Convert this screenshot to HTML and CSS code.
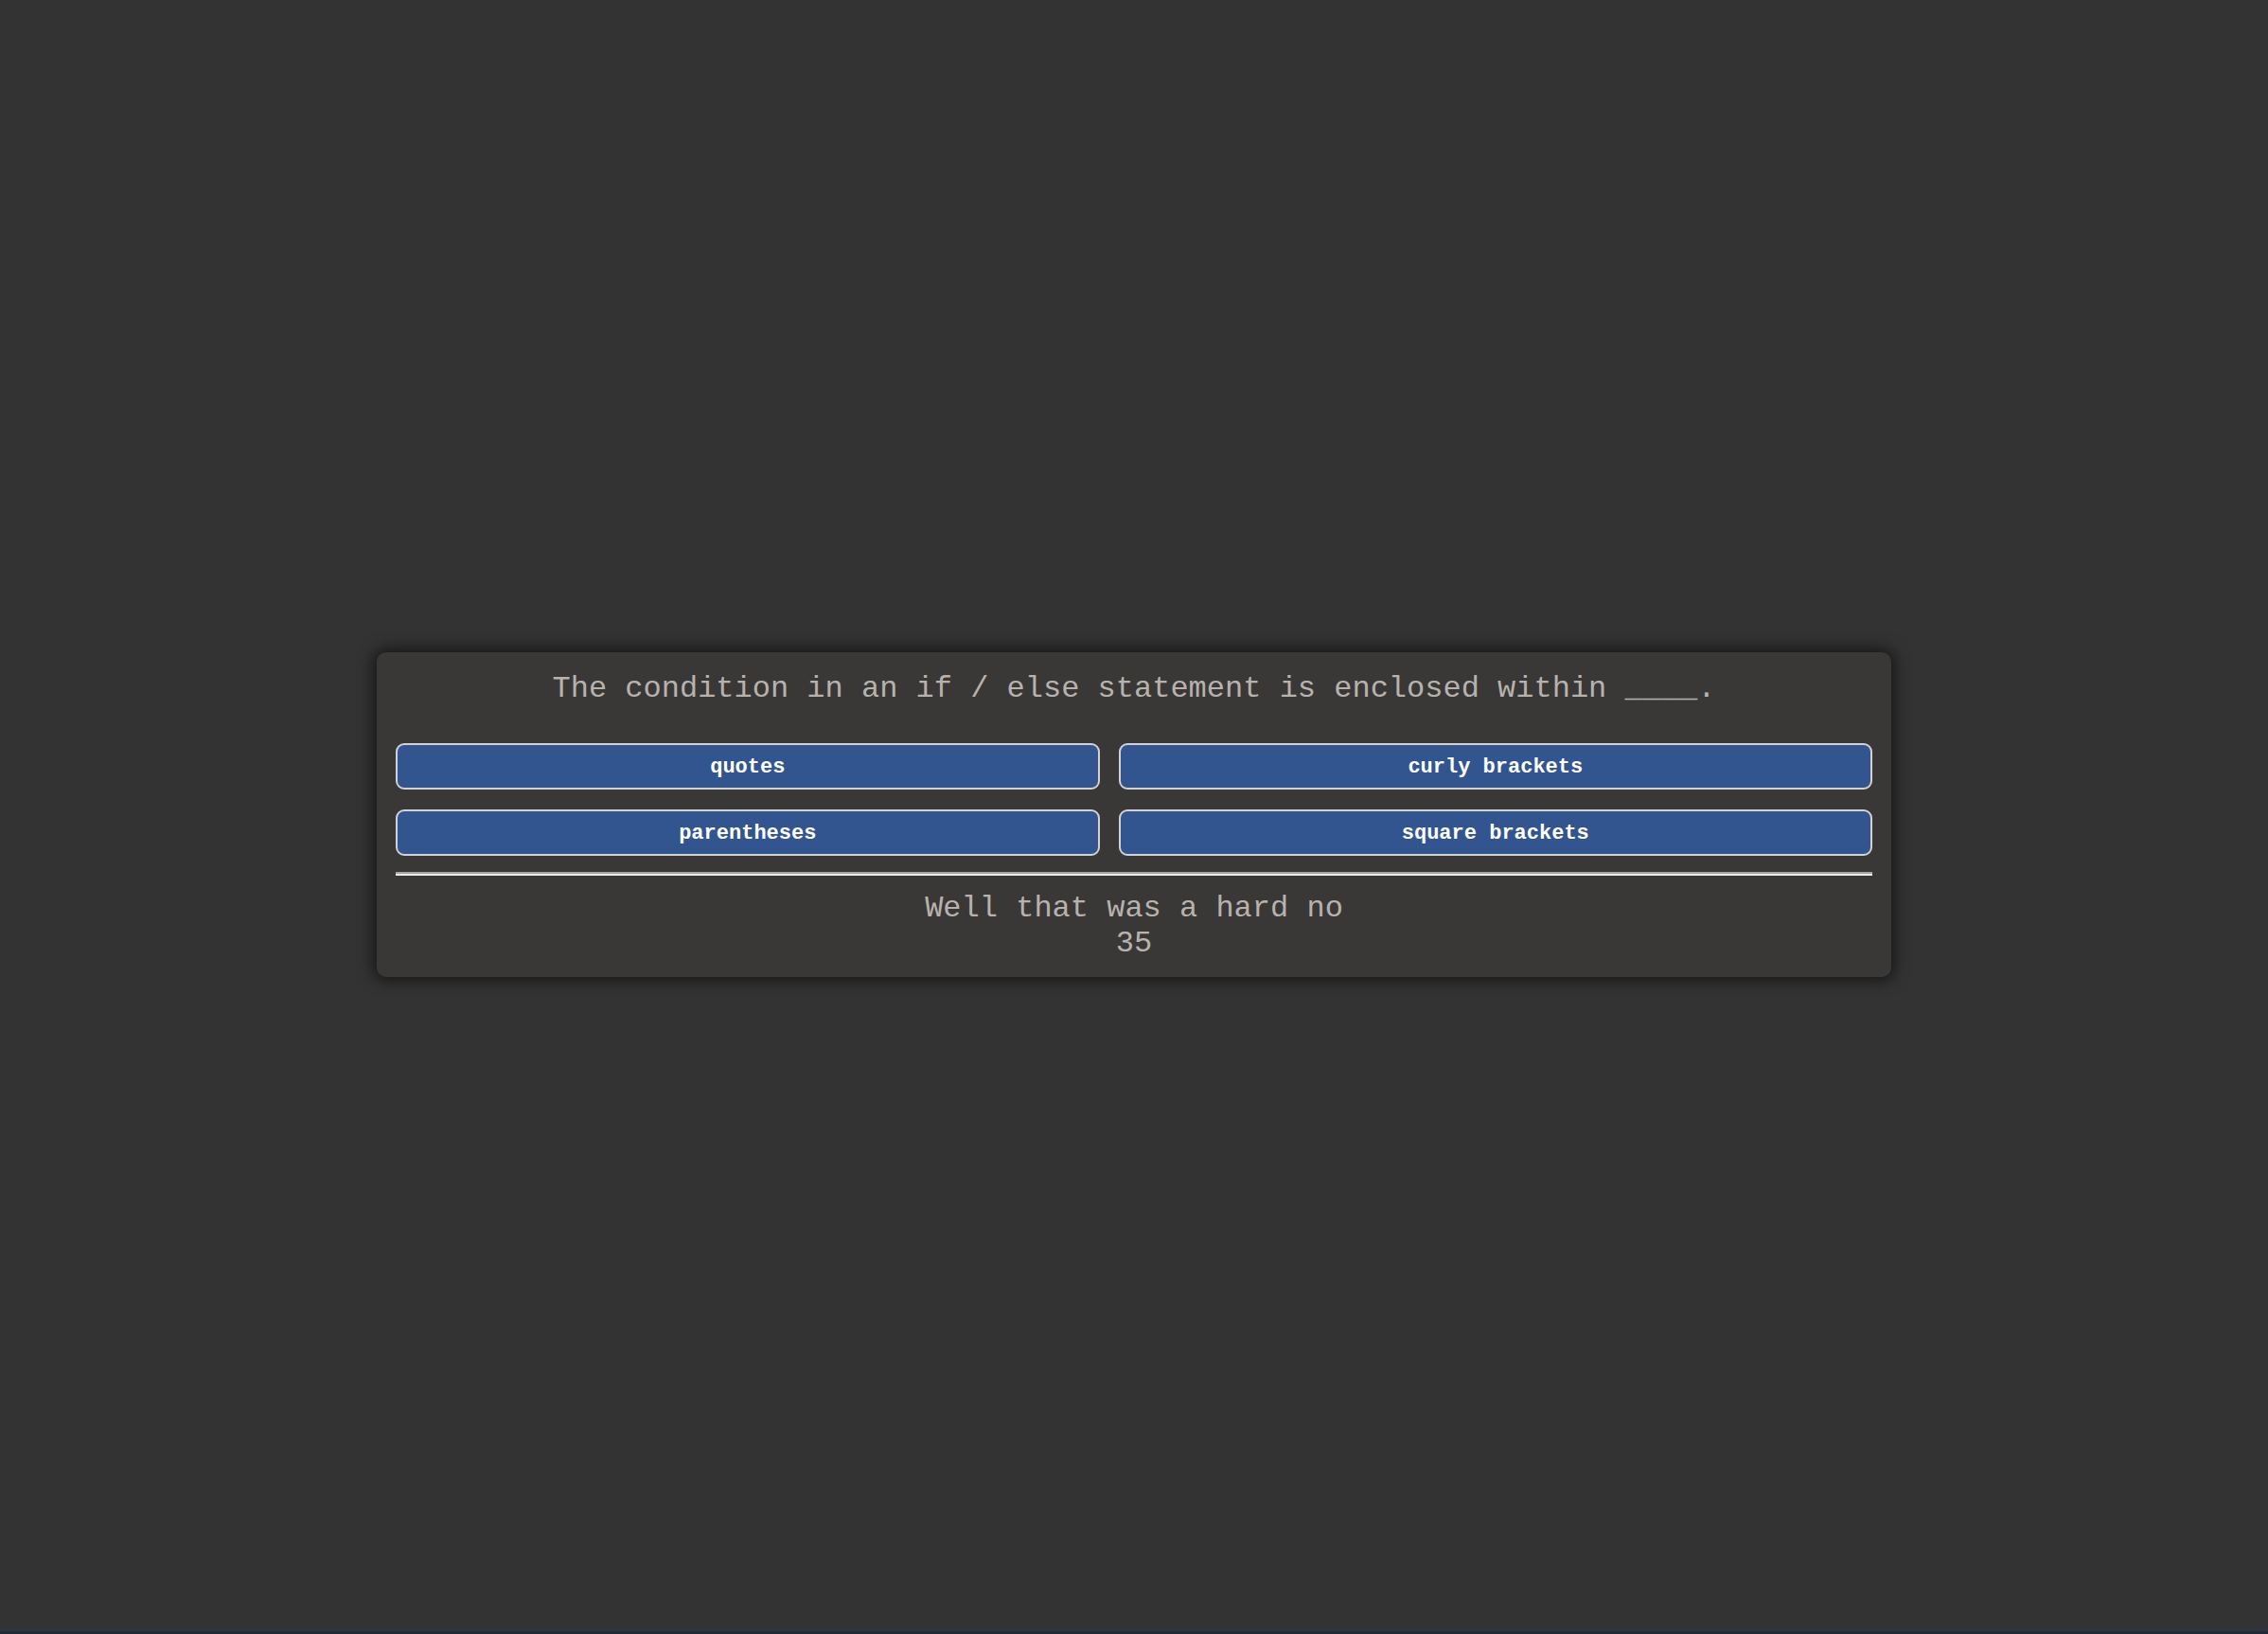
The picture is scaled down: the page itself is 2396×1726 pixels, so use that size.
FILE: index.html
```html
<!DOCTYPE html>
<html lang="en">
<head>
<meta charset="utf-8">
<title>Quiz</title>
<link rel="stylesheet" href="styles.css">
</head>
<body>
<main class="stage">
  <section class="card">
    <h2 class="question">The condition in an if / else statement is enclosed within ____.</h2>
    <div class="choices">
      <button class="choice">quotes</button>
      <button class="choice">curly brackets</button>
      <button class="choice">parentheses</button>
      <button class="choice">square brackets</button>
    </div>
    <hr class="divider">
    <div class="result">
      <p class="feedback">Well that was a hard no</p>
      <p class="score">35</p>
    </div>
  </section>
</main>
<div class="desktop-strip"></div>
</body>
</html>
```

FILE: styles.css
```css
html, body {
  margin: 0;
  padding: 0;
  height: 100%;
}

body {
  background: #333333;
  font-family: "Liberation Mono", "Courier New", monospace;
  display: flex;
  flex-direction: column;
  min-height: 100vh;
}

.stage {
  flex: 1;
  display: flex;
  align-items: center;
  justify-content: center;
}

.desktop-strip {
  height: 3px;
  background: #1d2b3a;
}

.card {
  width: 1600px;
  box-sizing: border-box;
  margin-bottom: 3px;
  padding: 20px 20px 17px;
  background: #3a3836;
  border-radius: 10px;
  box-shadow: 0 0 16px 4px rgba(0, 0, 0, 0.55);
}

.question {
  margin: 0 0 39px;
  font-size: 32px;
  font-weight: normal;
  line-height: normal;
  text-align: center;
  color: #b8b2ae;
}

.choices {
  display: grid;
  grid-template-columns: auto auto;
  gap: 21px 20px;
}

.choice {
  font-family: "Liberation Mono", "Courier New", monospace;
  font-size: 22px;
  font-weight: bold;
  line-height: normal;
  color: #ffffff;
  background: #325590;
  border: 2px solid #d2d2d2;
  border-radius: 9px;
  padding: 11px 16px 9px;
  margin: 0;
  text-align: center;
  cursor: pointer;
}

.divider {
  margin: 17px 0 16px;
  height: 0;
  border: 0;
  border-top: 2px solid #a6a6a6;
  border-bottom: 2px solid #ececec;
}

.result {
  text-align: center;
  color: #b8b2ae;
  font-size: 32px;
  line-height: normal;
}

.feedback,
.score {
  margin: 0;
}
```
